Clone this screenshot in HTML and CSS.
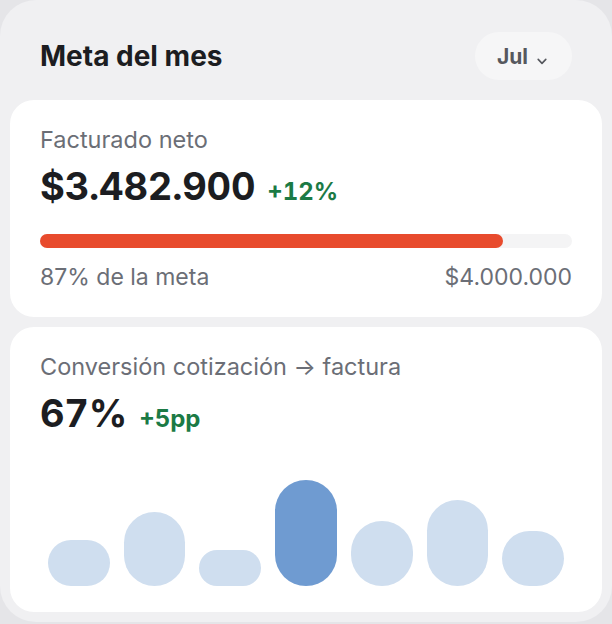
FILE: index.html
```html
<!DOCTYPE html>
<html lang="es">
<head>
    <meta charset="UTF-8">
    <meta name="viewport" content="width=device-width, initial-scale=1.0">
    <title>Meta del mes</title>
    <link rel="stylesheet" href="styles.css">
</head>
<body>
    <div class="panel">
        <div class="panel-head">
            <h2>Meta del mes</h2>
            <button class="month">
                <span>Jul</span>
                <svg width="10" height="7" viewBox="0 0 10 7"><path d="M1.2 1.4 L5 5.4 L8.8 1.4" fill="none" stroke="#55575d" stroke-width="1.6" stroke-linecap="round" stroke-linejoin="round"/></svg>
            </button>
        </div>

        <div class="card">
            <p class="label">Facturado neto</p>
            <div class="value">
                <span class="big">$3.482.900</span>
                <span class="delta">+12%</span>
            </div>
            <div class="track">
                <div class="fill" style="width: 87%"></div>
            </div>
            <div class="foot">
                <span>87% de la meta</span>
                <span>$4.000.000</span>
            </div>
        </div>

        <div class="card">
            <p class="label">Conversión cotización → factura</p>
            <div class="value">
                <span class="big">67%</span>
                <span class="delta">+5pp</span>
            </div>
            <div class="chart">
                <div class="bar" style="height: 46px"></div>
                <div class="bar" style="height: 74px"></div>
                <div class="bar" style="height: 36px"></div>
                <div class="bar current" style="height: 106px"></div>
                <div class="bar" style="height: 65px"></div>
                <div class="bar" style="height: 86px"></div>
                <div class="bar" style="height: 55px"></div>
            </div>
        </div>
    </div>
</body>
</html>
```

FILE: styles.css
```css
*{
    margin: 0;
    padding: 0;
    box-sizing: border-box;
}
body{
    background-color: #e5e5e8;
    font-family: Inter, "Noto Sans", sans-serif;
    color: #1c1d21;
}

.panel{
    width: 612px;
    height: 622px;
    background-color: #f0f0f2;
    border-radius: 36px;
    padding: 0 10px;
}

.panel-head{
    display: flex;
    justify-content: space-between;
    align-items: center;
    padding: 32px 30px 20px;
}
.panel-head h2{
    font-size: 28px;
    line-height: 34px;
    font-weight: 700;
}
.month{
    display: flex;
    align-items: center;
    gap: 9px;
    height: 48px;
    width: 97px;
    padding: 0 22px;
    border: none;
    border-radius: 24px;
    background-color: #f6f6f7;
    font-family: inherit;
    font-size: 21px;
    font-weight: 700;
    color: #56585e;
}
.month svg{
    margin-top: 10px;
}

.card{
    background-color: #fff;
    border-radius: 24px;
    padding: 25px 30px 26px;
    margin-bottom: 10px;
}
.label{
    font-size: 23.5px;
    line-height: 30px;
    color: #6b6e76;
}
.value{
    display: flex;
    align-items: baseline;
    gap: 12px;
    margin-top: 8px;
    font-variant-numeric: tabular-nums;
}
.big{
    font-size: 38px;
    line-height: 46px;
    font-weight: 700;
    letter-spacing: -0.2px;
}
.delta{
    font-size: 24px;
    font-weight: 700;
    color: #1b7a45;
}

.track{
    margin-top: 25px;
    height: 14px;
    border-radius: 7px;
    background-color: #f4f4f5;
}
.fill{
    height: 100%;
    border-radius: 7px;
    background-color: #e84b2d;
}
.foot{
    display: flex;
    justify-content: space-between;
    margin-top: 15px;
    font-size: 23px;
    line-height: 28px;
    color: #6b6e76;
}

.chart{
    display: flex;
    align-items: flex-end;
    gap: 14px;
    height: 150px;
    padding: 0 8px;
}
.bar{
    flex: 1;
    border-radius: 999px;
    background-color: #cfdeef;
}
.bar.current{
    background-color: #6f9bd1;
}
```
